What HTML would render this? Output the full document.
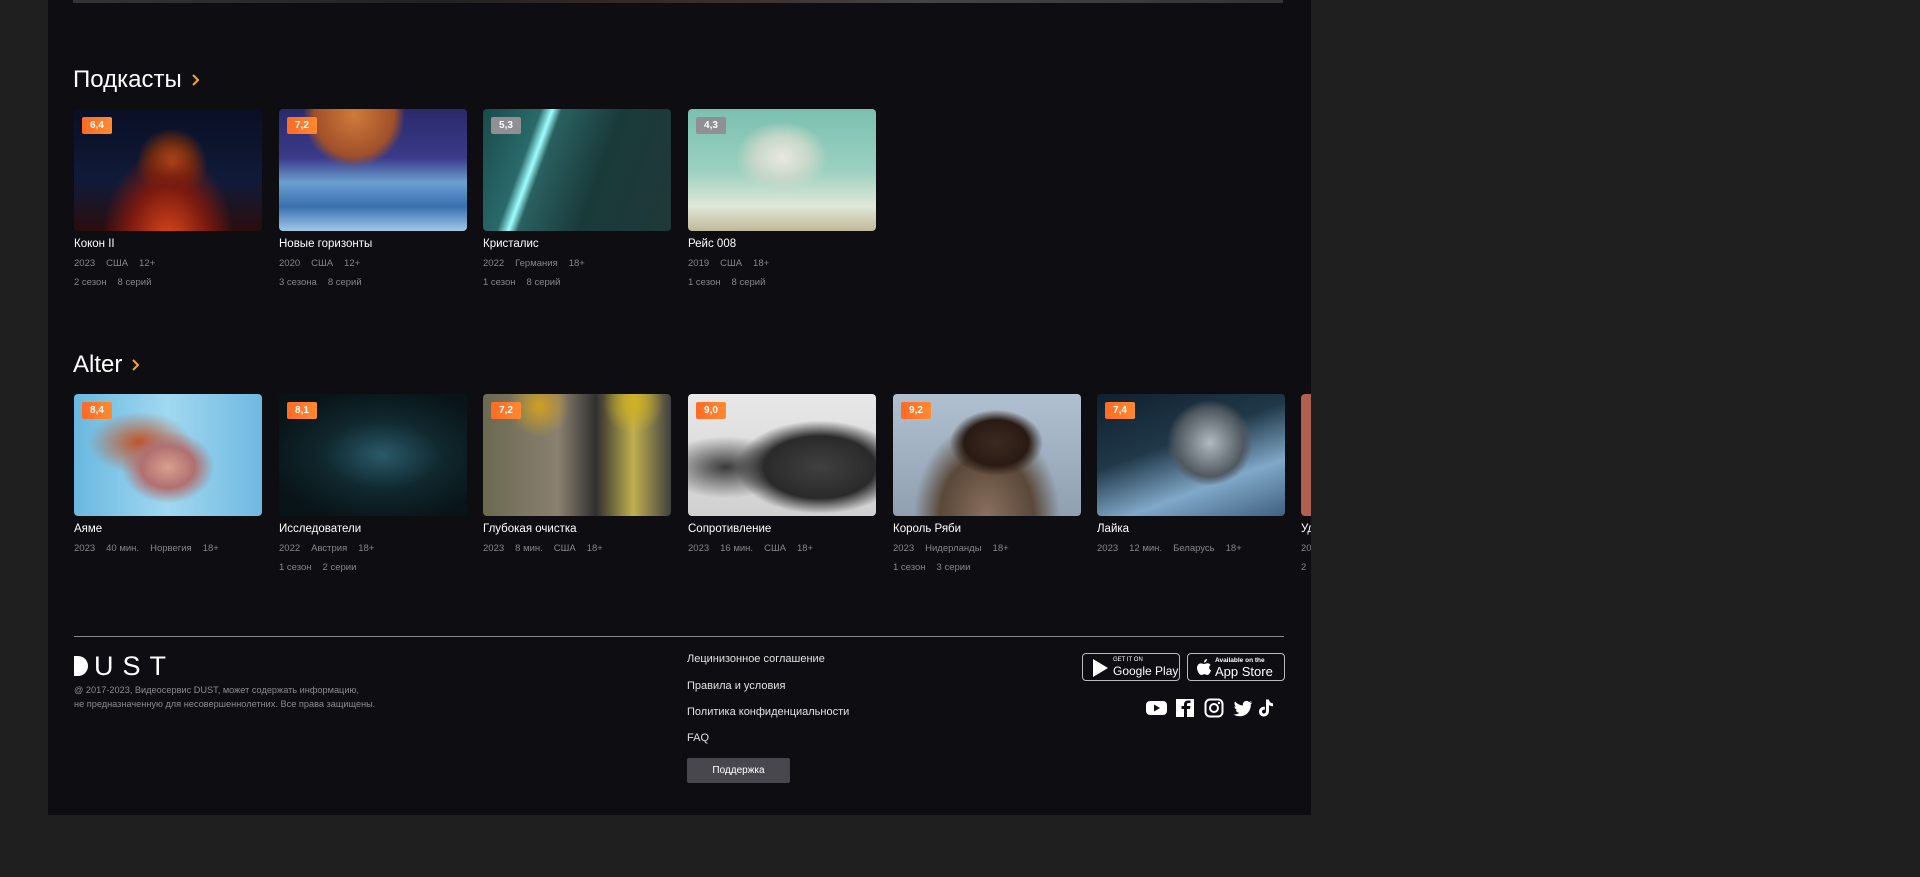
<!DOCTYPE html>
<html><head><meta charset="utf-8"><style>
*{margin:0;padding:0;box-sizing:border-box}
body{width:1920px;height:877px;background:#1f1f1f;font-family:"Liberation Sans",sans-serif;overflow:hidden;position:relative}
.panel{position:absolute;left:48px;top:0;width:1263px;height:815px;background:#0e0e12;overflow:hidden}
.h{position:absolute;left:25px;color:#fff;font-size:24px;font-weight:400}
.h svg{margin-left:9px;vertical-align:0px}
.card{position:absolute;width:188px}
.img{width:188px;height:122px;border-radius:4px;position:relative;overflow:hidden}
.b{position:absolute;left:8px;top:8px;width:30px;height:17px;border-radius:2px;background:linear-gradient(90deg,#ff6a26,#ff8a30);color:#fff;font-size:10px;font-weight:bold;text-align:center;line-height:17px}
.b.g{background:#8f8f94}
.t{color:#fff;font-size:11.5px;margin-top:7px}
.m{color:#85858b;font-size:9.5px;margin-top:8px}
.m i{font-style:normal;margin-right:11px}
.links a{position:absolute;left:639px;color:#e2e2e2;font-size:11px;text-decoration:none}
.store{position:absolute;top:653px;width:98px;height:28px;border:1px solid #bbb;border-radius:4px;color:#fff}
</style></head><body>
<div class="panel">
<div style="position:absolute;left:25px;top:0;width:1210px;height:3px;background:linear-gradient(90deg,#333,#222 30%,#3a2a2a 50%,#444 70%,#333)"></div>
<div class="h" style="top:66px">Подкасты<svg width="9" height="14" viewBox="0 0 9 14"><path d="M2 2 L7 7 L2 12" fill="none" stroke="#f5a623" stroke-width="2"/></svg></div>

<div class="card" style="left:26px;top:109px"><div class="img" style="background:radial-gradient(ellipse at 50% 110%,#e24a1a 0,#7a1a10 30%,transparent 50%),radial-gradient(circle at 52% 45%,#c8561a 0,#6a2a10 18%,transparent 30%),linear-gradient(#0a0f25,#101a38 60%,#2a0d0d)"><div class="b">6,4</div></div><div class="t">Кокон II</div><div class="m"><i>2023</i><i>США</i><i>12+</i></div><div class="m"><i>2 сезон</i><i>8 серий</i></div></div>
<div class="card" style="left:231px;top:109px"><div class="img" style="background:radial-gradient(ellipse at 40% 5%,#d07a3a 0,#a0502a 25%,transparent 32%),linear-gradient(#2a2a6a 0,#3a3a8a 40%,#6aa0d0 60%,#3a70b0 80%,#a0c8e8)"><div class="b">7,2</div></div><div class="t">Новые горизонты</div><div class="m"><i>2020</i><i>США</i><i>12+</i></div><div class="m"><i>3 сезона</i><i>8 серий</i></div></div>
<div class="card" style="left:435px;top:109px"><div class="img" style="background:linear-gradient(110deg,#1a4a4a 0,#2a6a6a 25%,#9fffff 30%,#2a6060 34%,#1a3a3a 60%,#203838)"><div class="b g">5,3</div></div><div class="t">Кристалис</div><div class="m"><i>2022</i><i>Германия</i><i>18+</i></div><div class="m"><i>1 сезон</i><i>8 серий</i></div></div>
<div class="card" style="left:640px;top:109px"><div class="img" style="background:radial-gradient(ellipse at 50% 40%,#e8e8e0 0,#c8d8c8 20%,transparent 35%),linear-gradient(#7ac0b0,#9ad0c0 50%,#e0e8d8 80%,#c0b898)"><div class="b g">4,3</div></div><div class="t">Рейс 008</div><div class="m"><i>2019</i><i>США</i><i>18+</i></div><div class="m"><i>1 сезон</i><i>8 серий</i></div></div>

<div class="h" style="top:351px">Alter<svg width="9" height="14" viewBox="0 0 9 14"><path d="M2 2 L7 7 L2 12" fill="none" stroke="#f5a623" stroke-width="2"/></svg></div>

<div class="card" style="left:26px;top:394px"><div class="img" style="background:radial-gradient(ellipse at 50% 60%,#d8a090 0,#b07070 20%,transparent 35%),radial-gradient(ellipse at 35% 40%,#c05020 0,transparent 30%),linear-gradient(90deg,#6ab8e0,#a0d8f0 50%,#70b8e0)"><div class="b">8,4</div></div><div class="t">Аяме</div><div class="m"><i>2023</i><i>40 мин.</i><i>Норвегия</i><i>18+</i></div></div>
<div class="card" style="left:231px;top:394px"><div class="img" style="background:radial-gradient(ellipse at 55% 50%,#2a5a6a 0,#10282e 40%,#081418 80%)"><div class="b">8,1</div></div><div class="t">Исследователи</div><div class="m"><i>2022</i><i>Австрия</i><i>18+</i></div><div class="m"><i>1 сезон</i><i>2 серии</i></div></div>
<div class="card" style="left:435px;top:394px"><div class="img" style="background:radial-gradient(circle at 30% 10%,#d0a020 0,transparent 18%),radial-gradient(circle at 80% 8%,#d0b020 0,transparent 16%),linear-gradient(90deg,#6a6a50,#8a8070 40%,#303030 60%,#c0b050 80%,#404040)"><div class="b">7,2</div></div><div class="t">Глубокая очистка</div><div class="m"><i>2023</i><i>8 мин.</i><i>США</i><i>18+</i></div></div>
<div class="card" style="left:640px;top:394px"><div class="img" style="background:radial-gradient(ellipse at 70% 60%,#404040 0,#2a2a2a 30%,transparent 45%),radial-gradient(ellipse at 20% 60%,#3a3a3a 0,transparent 30%),linear-gradient(#e8e8e8,#d0d0d0)"><div class="b">9,0</div></div><div class="t">Сопротивление</div><div class="m"><i>2023</i><i>16 мин.</i><i>США</i><i>18+</i></div></div>
<div class="card" style="left:845px;top:394px"><div class="img" style="background:radial-gradient(ellipse at 55% 40%,#3a2a20 0,#2a1a14 22%,transparent 32%),radial-gradient(ellipse at 50% 100%,#8a7060 0,#5a4838 35%,transparent 55%),linear-gradient(#b0c0d0,#90a0b0)"><div class="b">9,2</div></div><div class="t">Король Ряби</div><div class="m"><i>2023</i><i>Нидерланды</i><i>18+</i></div><div class="m"><i>1 сезон</i><i>3 серии</i></div></div>
<div class="card" style="left:1049px;top:394px"><div class="img" style="background:radial-gradient(circle at 60% 40%,#b0b8c0 0,#505860 25%,transparent 32%),linear-gradient(160deg,#102030 0,#203848 40%,#80a8c8 70%,#406080)"><div class="b">7,4</div></div><div class="t">Лайка</div><div class="m"><i>2023</i><i>12 мин.</i><i>Беларусь</i><i>18+</i></div></div>
<div class="card" style="left:1253px;top:394px"><div class="img" style="background:#b06050"></div><div class="t">Уд</div><div class="m"><i>20</i></div><div class="m"><i>2</i></div></div>

<div style="position:absolute;left:26px;top:636px;width:1210px;height:1px;background:#8a8a8a"></div>
<div style="position:absolute;left:26px;top:651px;color:#fff;font-size:27px;letter-spacing:9px;font-weight:300"><span style="display:inline-block;width:14px;height:20px;background:#fff;border-radius:0 10px 10px 0;vertical-align:-1px;margin-right:6px"></span>UST</div>
<div style="position:absolute;left:26px;top:683px;color:#8a8a90;font-size:9.2px;line-height:14px">@ 2017-2023, Видеосервис DUST, может содержать информацию,<br>не предназначенную для несовершеннолетних. Все права защищены.</div>
<div class="links"><a style="top:653px">Лецинизонное соглашение</a><a style="top:680px">Правила и условия</a><a style="top:706px">Политика конфиденциальности</a><a style="top:732px">FAQ</a></div>
<div style="position:absolute;left:639px;top:758px;width:103px;height:25px;background:#48474d;border-radius:2px;color:#fff;font-size:10px;text-align:center;line-height:25px">Поддержка</div>

<div class="store" style="left:1034px"><svg width="20" height="20" style="position:absolute;left:7px;top:4px" viewBox="0 0 20 20"><path d="M3 1 L18 10 L3 19 Z" fill="#fff"/></svg><div style="position:absolute;left:30px;top:3px;font-size:6px">GET IT ON</div><div style="position:absolute;left:30px;top:10px;font-size:12px">Google Play</div></div>
<div class="store" style="left:1139px"><svg width="16" height="20" style="position:absolute;left:8px;top:4px" viewBox="0 0 16 20"><path d="M11 1 C11 3 9.5 4.5 8 4.5 C8 2.5 9.5 1 11 1 Z M8 6 C9 6 10 5.3 11.5 5.3 C13 5.3 14 6.2 14.6 7 C12.5 8.2 12.8 11.5 15 12.4 C14.4 14.2 13 17 11.5 17 C10.3 17 10 16.3 8.5 16.3 C7 16.3 6.5 17 5.4 17 C3.5 17 1 13 1 10 C1 7 3 5.4 4.8 5.4 C6.2 5.4 7 6 8 6 Z" fill="#fff"/></svg><div style="position:absolute;left:27px;top:3px;font-size:6.5px;font-weight:bold">Available on the</div><div style="position:absolute;left:27px;top:10px;font-size:13px">App Store</div></div>

<svg style="position:absolute;left:1098px;top:698px" width="130" height="20" viewBox="0 0 130 20">
<rect x="0" y="3" width="21" height="14" rx="4" fill="#fff"/><path d="M8 6.5 L14 10 L8 13.5Z" fill="#0e0e12"/>
<rect x="30" y="1" width="18" height="18" fill="#fff"/><path d="M41 19 V11 H44 L44.5 8 H41 V6.5 C41 5.7 41.4 5 42.5 5 H44.5 V2.5 H42 C39.5 2.5 38 4 38 6.5 V8 H35.5 V11 H38 V19Z" fill="#0e0e12"/>
<rect x="59.5" y="1.5" width="17" height="17" rx="4.5" fill="none" stroke="#fff" stroke-width="2"/><circle cx="68" cy="10" r="4" fill="none" stroke="#fff" stroke-width="2"/><circle cx="73" cy="5" r="1.2" fill="#fff"/>
<path d="M106 4.5 C105.3 4.8 104.6 5 103.8 5.1 C104.6 4.6 105.2 3.9 105.5 3 C104.7 3.5 103.9 3.8 103 4 C101.6 2.5 99 2.6 97.7 4.2 C96.9 5.1 96.7 6.3 97 7.5 C93.8 7.3 91 5.8 89 3.4 C88 5.2 88.5 7.4 90.2 8.6 C89.6 8.6 89 8.4 88.5 8.1 C88.5 10 89.8 11.6 91.6 12 C91 12.2 90.4 12.2 89.8 12.1 C90.3 13.7 91.8 14.8 93.5 14.8 C91.8 16.1 89.6 16.7 87.5 16.5 C89.3 17.7 91.5 18.3 93.7 18.3 C101 18.3 105 12.2 104.8 6.5 C105.3 5.9 105.8 5.3 106 4.5Z" fill="#fff"/>
<path d="M120 1.5 H123 C123.2 3.8 124.8 5.3 127 5.4 V8.3 C125.5 8.3 124.2 7.8 123 7 V13 C123 16 120.8 18.5 117.8 18.5 C115 18.5 113 16.3 113 13.6 C113 10.6 115.7 8.3 118.8 8.8 V11.8 C117.3 11.3 116 12.3 116 13.6 C116 14.8 116.9 15.6 117.9 15.6 C119.1 15.6 120 14.7 120 13.4Z" fill="#fff"/>
</svg>
</div>
</body></html>
